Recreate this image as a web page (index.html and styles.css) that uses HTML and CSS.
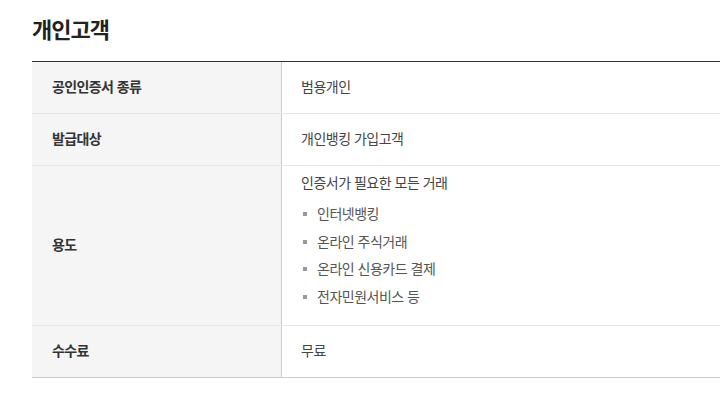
FILE: index.html
```html
<!DOCTYPE html>
<html lang="ko">
<head>
<meta charset="utf-8">
<link rel="stylesheet" href="styles.css">
</head>
<body>
<div class="page">
  <h2 class="title">개인고객</h2>
  <div class="table">
    <div class="row">
      <div class="th">공인인증서 종류</div>
      <div class="td">범용개인</div>
    </div>
    <div class="row">
      <div class="th">발급대상</div>
      <div class="td">개인뱅킹 가입고객</div>
    </div>
    <div class="row">
      <div class="th">용도</div>
      <div class="td td-list">
        <p class="lead">인증서가 필요한 모든 거래</p>
        <ul class="bullets">
          <li>인터넷뱅킹</li>
          <li>온라인 주식거래</li>
          <li>온라인 신용카드 결제</li>
          <li>전자민원서비스 등</li>
        </ul>
      </div>
    </div>
    <div class="row">
      <div class="th">수수료</div>
      <div class="td">무료</div>
    </div>
  </div>
</div>
</body>
</html>
```

FILE: styles.css
```css
html, body {
  margin: 0;
  padding: 0;
  background: #fff;
}
body {
  font-family: "Noto Sans CJK KR", "Noto Sans", sans-serif;
  color: #333;
  overflow: hidden;
}
.page {
  padding: 12px 0 0 32px;
  width: 720px;
}
.title {
  margin: 0;
  font-size: 22px;
  font-weight: 700;
  line-height: 32px;
  color: #222;
  letter-spacing: -1px;
}
.table {
  margin-top: 17px;
  border-top: 1px solid #333;
  border-bottom: 1px solid #ccc;
}
.row {
  display: grid;
  grid-template-columns: 250px 1fr;
  border-top: 1px solid #e8e8e8;
}
.row:first-child {
  border-top: 0;
}
.th {
  background: #f5f5f5;
  border-right: 1px solid #ccc;
  padding: 0 20px 3px;
  font-size: 14px;
  font-weight: 700;
  color: #333;
  display: flex;
  align-items: center;
  min-height: 48px;
  letter-spacing: -0.6px;
}
.td {
  padding: 0 19px 3px;
  font-size: 14px;
  color: #444;
  display: flex;
  align-items: center;
  min-height: 48px;
  letter-spacing: -0.5px;
}
.td-list {
  flex-direction: column;
  align-items: flex-start;
  padding-top: 6px;
  padding-bottom: 14px;
}
.lead {
  margin: 0;
  line-height: 20px;
}
.bullets {
  list-style: none;
  margin: 8px 0 0;
  padding: 0;
}
.bullets li {
  position: relative;
  padding-left: 16px;
  line-height: 27.7px;
  color: #555;
}
.bullets li::before {
  content: "";
  position: absolute;
  left: 2px;
  top: 12px;
  width: 4px;
  height: 4px;
  background: #999;
}
```
